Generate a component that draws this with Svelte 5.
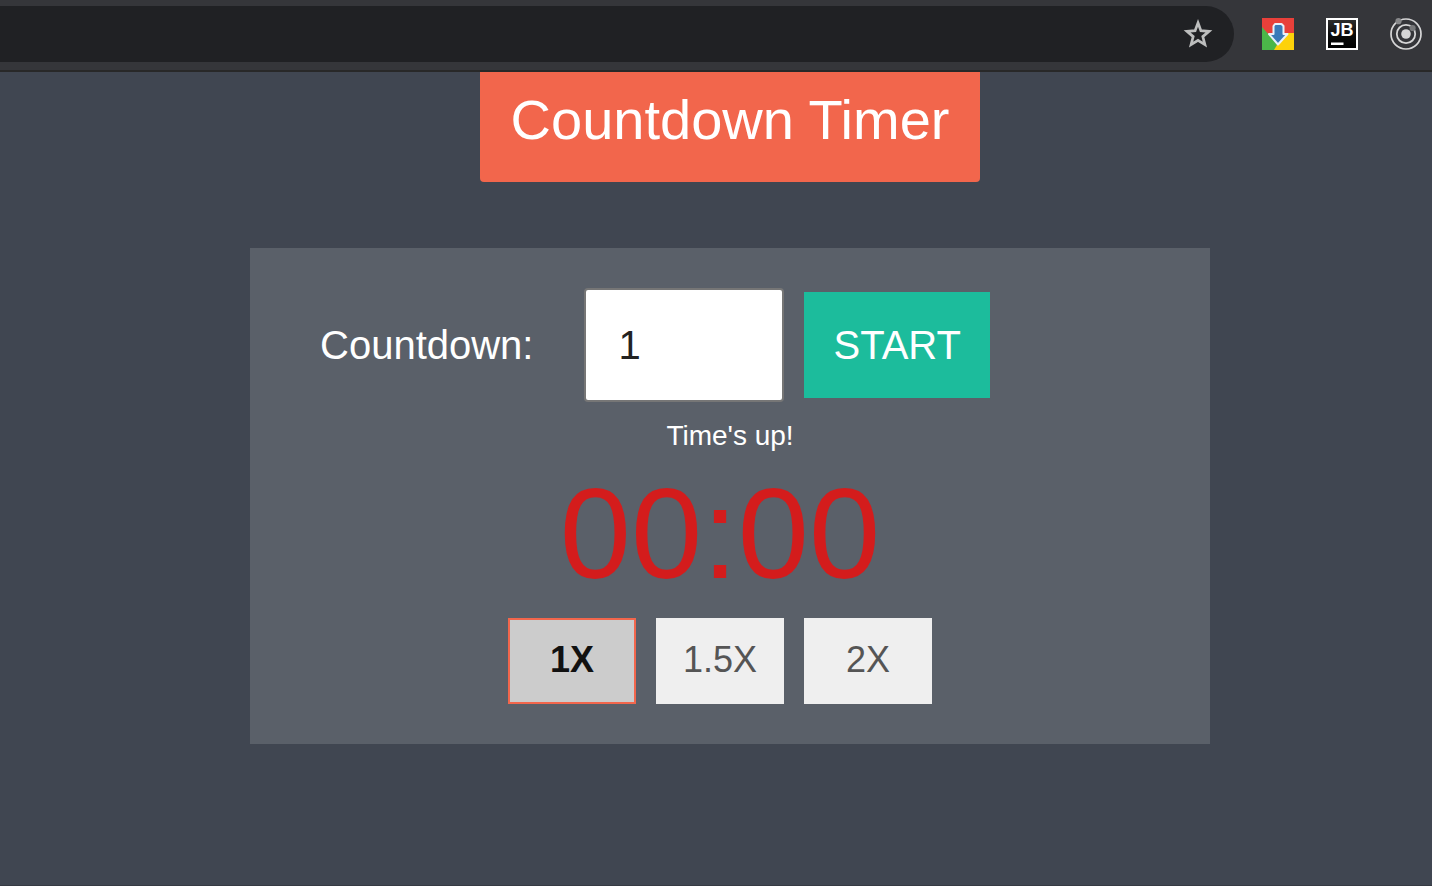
<script>
  import { onDestroy } from 'svelte';

  const speeds = [1, 1.5, 2];
  let minutes = $state(1);
  let speed = $state(1);
  let remaining = $state(0);
  let running = $state(false);
  let timer;

  const pad = (n) => String(n).padStart(2, '0');
  let clock = $derived(`${pad(Math.floor(remaining / 60))}:${pad(remaining % 60)}`);

  function tick() {
    remaining = Math.max(0, remaining - 1);
    if (remaining === 0) {
      clearInterval(timer);
      running = false;
    }
  }

  function schedule() {
    clearInterval(timer);
    if (running) timer = setInterval(tick, 1000 / speed);
  }

  function start(event) {
    event.preventDefault();
    remaining = Math.max(0, Math.round((minutes || 0) * 60));
    running = remaining > 0;
    schedule();
  }

  function choose(value) {
    speed = value;
    schedule();
  }

  onDestroy(() => clearInterval(timer));
</script>

<div class="page">
  <header class="toolbar">
    <div class="address">
      <button class="icon" aria-label="Bookmark this page">
        <svg viewBox="0 0 32 32" width="32" height="32">
          <path d="M16 4.8 L18.9 12.7 L27 13.3 L20.8 18.6 L22.9 26.6 L16 22.3 L9.1 26.6 L11.2 18.6 L5 13.3 L13.1 12.7 Z" fill="none" stroke="#bdbebe" stroke-width="2.7" />
        </svg>
      </button>
    </div>
    <button class="icon" aria-label="Downloads">
      <svg viewBox="0 0 32 32" width="32" height="32">
        <rect width="32" height="32" fill="#e8403a" />
        <path d="M0 9 L17 28 L13 32 H0 Z" fill="#4bb649" />
        <path d="M22 15 H32 V32 H12 Z" fill="#fdd20a" />
        <path d="M13 6 H19.5 L21.5 8 V16 H25.5 L16 26.5 L7 16 H11.5 V8 Z" fill="#3a7ab8" stroke="#e8f1fa" stroke-width="2" stroke-linejoin="round" />
      </svg>
    </button>
    <button class="icon" aria-label="JetBrains">
      <svg viewBox="0 0 32 32" width="32" height="32">
        <defs>
          <linearGradient id="ink" x1="0" y1="0" x2="0" y2="1">
            <stop offset="0" stop-color="#303030" />
            <stop offset="0.5" stop-color="#0c0c0c" />
            <stop offset="1" stop-color="#000" />
          </linearGradient>
        </defs>
        <rect x="1" y="1" width="30" height="30" fill="url(#ink)" stroke="#fff" stroke-width="2" />
        <text x="4.5" y="18" font-family="Liberation Sans, sans-serif" font-size="18" font-weight="700" fill="#fff">JB</text>
        <rect x="5" y="24.5" width="12.5" height="2.5" fill="#fff" />
      </svg>
    </button>
    <button class="icon" aria-label="Orbit">
      <svg viewBox="0 0 32 32" width="32" height="32">
        <circle cx="16" cy="16" r="15" fill="none" stroke="#d6d6d7" stroke-width="1.7" />
        <circle cx="16" cy="16" r="9.2" fill="none" stroke="#d6d6d7" stroke-width="1.8" />
        <circle cx="16" cy="16" r="4.8" fill="#d6d6d7" />
        <circle cx="8.5" cy="3.2" r="3.1" fill="#87888a" />
        <circle cx="22.6" cy="10" r="3.1" fill="#77787a" />
      </svg>
    </button>
  </header>

  <main>
    <h1>Countdown Timer</h1>
    <section class="card">
      <form onsubmit={start}>
        <label for="minutes">Countdown:</label>
        <input id="minutes" type="number" min="0" bind:value={minutes} />
        <button class="start" type="submit">START</button>
      </form>
      <p class="status">{running ? 'Counting down' : "Time's up!"}</p>
      <div class="clock" role="timer">{clock}</div>
      <div class="speeds">
        {#each speeds as value}
          <button class:active={speed === value} aria-pressed={speed === value} onclick={() => choose(value)}>{value}X</button>
        {/each}
      </div>
    </section>
  </main>
</div>

<style>
  :global(body) {
    margin: 0;
  }
  .page {
    box-sizing: border-box;
    min-height: 100vh;
    display: flex;
    flex-direction: column;
    background: #404651;
    border-bottom: 1px solid #363a43;
    font-family: "Liberation Sans", Arial, sans-serif;
    color: #fff;
  }
  button, input {
    font-family: inherit;
    margin: 0;
    box-sizing: border-box;
  }
  button {
    cursor: pointer;
  }
  .toolbar {
    display: flex;
    align-items: center;
    gap: 32px;
    padding: 6px 10px 8px 0;
    background: #35363a;
    border-bottom: 2px solid #282828;
  }
  .address {
    flex: 1;
    display: flex;
    align-items: center;
    justify-content: flex-end;
    height: 56px;
    margin-right: -4px;
    padding-right: 20px;
    box-sizing: border-box;
    border-radius: 0 28px 28px 0;
    background: #202124;
  }
  .icon {
    display: block;
    padding: 0;
    border: 0;
    background: none;
  }
  .icon svg {
    display: block;
  }
  main {
    display: flex;
    flex-direction: column;
    align-items: center;
    gap: 66px;
    padding: 0 0 40px 28px;
  }
  h1 {
    margin: 0;
    padding: 16px 31px 30px;
    border-radius: 0 0 4px 4px;
    background: #f2664c;
    font-size: 56px;
    line-height: 64px;
    font-weight: 400;
  }
  .card {
    box-sizing: border-box;
    width: 100%;
    max-width: 960px;
    padding: 40px 70px;
    background: #5a6069;
  }
  form {
    display: flex;
    align-items: center;
    font-size: 40px;
  }
  label {
    margin-right: 51px;
  }
  input {
    width: 200px;
    height: 114px;
    margin-right: 20px;
    padding: 0 32px;
    border: 2px solid #767676;
    border-radius: 4px;
    background: #fff;
    color: #222;
    font-size: 40px;
  }
  .start {
    padding: 30px 29px;
    border: 0;
    background: #1cbc9c;
    color: #fff;
    font-size: 40px;
    line-height: 46px;
  }
  .status {
    margin: 18px 0;
    font-size: 28px;
    line-height: 32px;
    text-align: center;
  }
  .clock {
    margin: 0 20px 20px 0;
    color: #d41c1c;
    font-size: 128px;
    line-height: 128px;
    text-align: center;
  }
  .speeds {
    display: flex;
    justify-content: center;
    gap: 20px;
    margin-right: 20px;
  }
  .speeds button {
    width: 128px;
    height: 86px;
    padding: 0 0 2px;
    border: 2px solid #efefef;
    background: #efefef;
    color: #555;
    font-size: 36px;
  }
  .speeds .active {
    border-color: #f2664c;
    background: #ccc;
    color: #111;
    font-weight: 700;
  }
</style>
